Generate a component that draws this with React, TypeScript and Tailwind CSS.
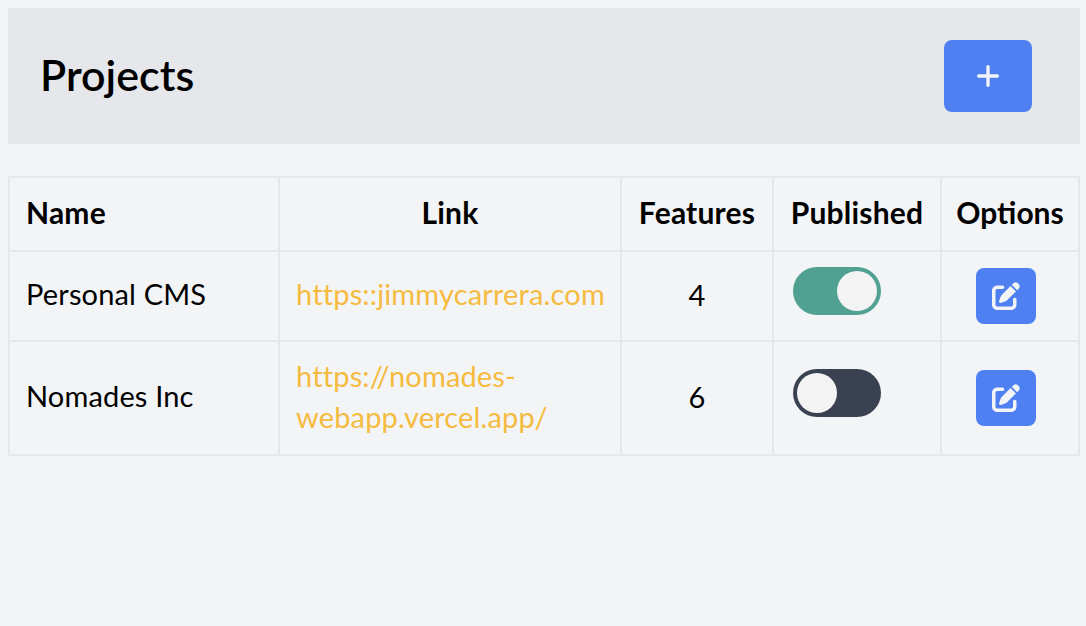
import React from 'react'
import { Plus } from 'lucide-react'
import { FaPenToSquare } from 'react-icons/fa6'

type Project = {
  name: string
  link: string
  features: number
  published: boolean
}

const projects: Project[] = [
  { name: 'Personal CMS', link: 'https::jimmycarrera.com', features: 4, published: true },
  { name: 'Nomades Inc', link: 'https://nomades-webapp.vercel.app/', features: 6, published: false },
]

function Toggle({ on }: { on: boolean }) {
  return (
    <div className={`mb-[10px] ml-[3px] flex h-12 w-[88px] rounded-full p-1 ${on ? 'justify-end bg-[#51a192]' : 'justify-start bg-[#3a4252]'}`}>
      <div className="h-10 w-10 rounded-full bg-[#f3f3f3]" />
    </div>
  )
}

export default function App() {
  return (
    <div className="min-h-screen bg-[#f3f4f6] p-2 font-['Lato',sans-serif] text-black">
      <div className="flex h-[136px] w-[1072px] items-center justify-between bg-[#e5e7eb] pl-8 pr-12">
        <h1 className="pb-[2px] text-[43px] font-semibold">Projects</h1>
        <button className="flex h-[72px] w-[88px] items-center justify-center rounded-lg bg-[#4f80f2] text-[#f3f4f6]">
          <Plus size={32} strokeWidth={2.5} />
        </button>
      </div>

      <table className="mt-8 w-[1070px] table-fixed border-collapse text-[29px] tracking-[0.15px]">
        <colgroup>
          <col className="w-[270px]" />
          <col className="w-[342px]" />
          <col className="w-[152px]" />
          <col className="w-[168px]" />
          <col className="w-[138px]" />
        </colgroup>
        <thead>
          <tr className="h-[74px] text-[30px] tracking-[0.2px]">
            <th className="border-2 border-[#e5e7eb] px-4 pb-[3px] text-left font-bold">Name</th>
            <th className="border-2 border-[#e5e7eb] px-4 pb-[3px] font-bold">Link</th>
            <th className="border-2 border-[#e5e7eb] px-2 pb-[3px] font-bold">Features</th>
            <th className="border-2 border-[#e5e7eb] px-2 pb-[3px] font-bold">Published</th>
            <th className="border-2 border-[#e5e7eb] px-2 pb-[3px] font-bold tracking-normal">Options</th>
          </tr>
        </thead>
        <tbody>
          {projects.map((p, i) => (
            <tr key={p.name} className={i === 0 ? 'h-[90px]' : 'h-[114px]'}>
              <td className="border-2 border-[#e5e7eb] px-4 pb-[4px]">{p.name}</td>
              <td className="border-2 border-[#e5e7eb] pb-[5px] pl-4 pr-2 leading-[41px] text-[#f5bb3f]">{p.link}</td>
              <td className="border-2 border-[#e5e7eb] px-4 pb-[3px] text-center">{p.features}</td>
              <td className="border-2 border-[#e5e7eb] px-4">
                <Toggle on={p.published} />
              </td>
              <td className="border-2 border-[#e5e7eb] px-4">
                <button className="ml-[18px] flex h-14 w-[60px] items-center justify-center rounded-lg bg-[#4f80f2] text-[#f3f4f6]">
                  <FaPenToSquare size={28} />
                </button>
              </td>
            </tr>
          ))}
        </tbody>
      </table>
    </div>
  )
}
